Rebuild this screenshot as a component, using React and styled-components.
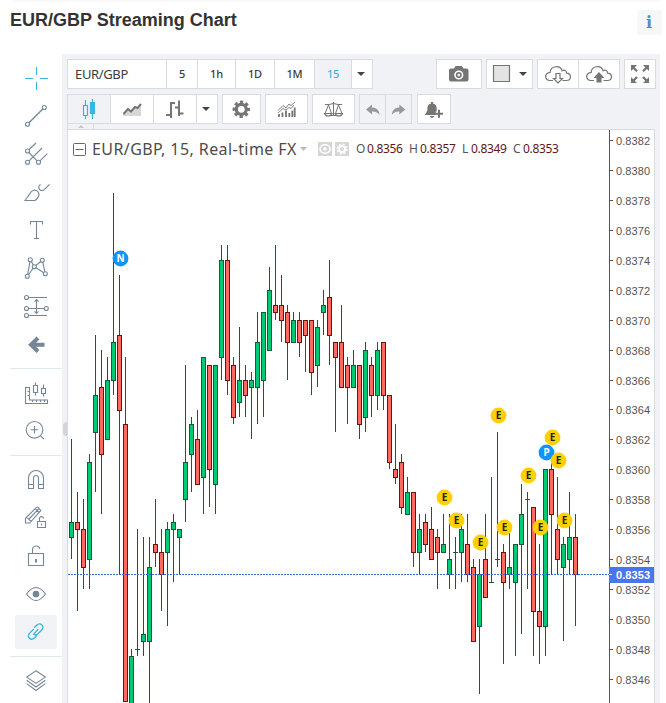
import React from "react";
import styled, { createGlobalStyle, css } from "styled-components";

const GlobalStyle = createGlobalStyle`
  * { box-sizing: border-box; }
  html, body { margin: 0; padding: 0; background: #fff; overflow: hidden; }
  svg { display: block; flex: none; }
`;

const LINE = "#d8dbe0";
const SLATE = "#758696";
const GREY = "#757575";
const BLUE = "#3bb3e4";

const Page = styled.div`
  width: 666px;
  height: 703px;
  overflow: hidden;
  display: flex;
  flex-direction: column;
  background: #fff;
`;

const TopShade = styled.div`
  height: 2px;
  margin: 0 6px 0 14px;
  background: linear-gradient(#f6f6f6, #fdfdfd);
`;

const Header = styled.header`
  height: 52px;
  padding: 8px 4px 0 10px;
  display: flex;
  justify-content: space-between;
  align-items: flex-start;
`;

const Title = styled.h1`
  margin: 0;
  font: bold 18px/20px "Liberation Sans", Arial, sans-serif;
  color: #333;
  letter-spacing: 0;
  white-space: nowrap;
`;

const InfoButton = styled.button`
  width: 25px;
  height: 25px;
  padding: 0 1px 0 0;
  border: 0;
  border-radius: 2px;
  background: #f6f7f8;
  color: #5a8bc4;
  font: bold 16px/25px "DejaVu Serif", serif;
`;

const Body = styled.main`
  flex: 1;
  min-height: 0;
  display: flex;
`;

const Sidebar = styled.nav`
  width: 62px;
  padding: 5px 0 0 10px;
  flex: none;
`;

const ToolGroup = styled.div`
  display: flex;
  flex-direction: column;
  padding: ${(p) => (p.$first ? "0 0 5px" : "5px 0")};
  border-bottom: 1px solid #e0e8ef;
  &:last-child { border: 0; padding-top: 4px; }
`;

const ToolButton = styled.button`
  display: block;
  width: 42px;
  height: 34px;
  flex: none;
  margin: 2px 5px;
  padding: 0;
  border: 0;
  border-radius: 2px;
  overflow: visible;
  background: ${(p) => (p.$active ? "#f1f3f6" : "transparent")};
  svg {
    margin: -2px 0;
    fill: none;
    stroke: ${(p) => (p.$blue || p.$active ? BLUE : SLATE)};
    stroke-width: 1.1;
  }
`;

const Panel = styled.section`
  width: 598px;
  padding: 5px 4px 0 5px;
  background: #f1f2f6;
  display: flex;
  flex-direction: column;
  position: relative;
`;

const Toolbar = styled.div`
  display: flex;
  gap: 4px;
  height: 30px;
  margin-bottom: ${(p) => (p.$last ? 0 : 5)}px;
`;

const ButtonGroup = styled.div`
  display: flex;
  height: 30px;
  border: 1px solid ${LINE};
  background: #fff;
  ${(p) => p.$push && css`margin-left: auto;`}
  ${(p) => p.$shift && css`margin-left: 1px;`}
`;

const Cell = styled.button`
  width: ${(p) => p.$w}px;
  height: 28px;
  padding: 0;
  display: flex;
  align-items: center;
  justify-content: center;
  border: 0;
  border-right: 1px solid ${LINE};
  background: ${(p) => (p.$muted ? "#f1f2f5" : "#fff")};
  color: ${(p) => (p.$active ? BLUE : "#3c3c3c")};
  font: 500 11px/16px "Noto Sans", sans-serif;
  letter-spacing: -0.2px;
  &:last-child { border-right: 0; }
`;

const SymbolCell = styled(Cell)`
  justify-content: flex-start;
  padding: 0 0 1px 7px;
  font-size: 13px;
  font-weight: 400;
  letter-spacing: -0.35px;
`;

const PaneTab = styled.div`
  width: 27px;
  height: 5px;
  border: solid ${LINE};
  border-width: 0 1px 0 1px;
  display: flex;
  justify-content: center;
  padding-top: 1px;
`;

const ChartPane = styled.div`
  width: 588px;
  flex: 1;
  min-height: 0;
  border: solid ${LINE};
  border-width: 1px 1px 0 1px;
  background: #fff;
  position: relative;
`;

const Legend = styled.div`
  position: absolute;
  left: 5px;
  top: 8px;
  height: 22px;
  display: flex;
  align-items: center;
  font-family: "Noto Sans", sans-serif;
`;

const LegendTitle = styled.span`
  width: 207px;
  margin-left: 6px;
  font-size: 16px;
  line-height: 22px;
  color: #4c4c4c;
  letter-spacing: 0.42px;
  white-space: nowrap;
`;

const LegendChip = styled.span`
  width: 14px;
  height: 14px;
  margin-left: ${(p) => p.$gap}px;
  background: #d6d6d6;
`;

const Quote = styled.span`
  width: ${(p) => p.$w}px;
  font-size: 12px;
  line-height: 22px;
  letter-spacing: -0.35px;
  color: ${(p) => (p.$value ? "#5b1a1a" : "#555")};
  white-space: nowrap;
`;

const QuoteRow = styled.span`
  display: flex;
  margin-left: 7px;
`;

const Handle = styled.span`
  position: absolute;
  left: 1px;
  top: 368px;
  width: 4px;
  height: 14px;
  border-radius: 4px 0 0 4px;
  background: #d3d4d7;
`;

const Tool = ({ children, ...props }) => (
  <ToolButton {...props}>
    <svg width="42" height="38" viewBox="0 0 42 38">{children}</svg>
  </ToolButton>
);

const Dots = ({ points }) =>
  points.map(([x, y]) => <circle key={`${x}-${y}`} cx={x} cy={y} r="2" fill="#fff" />);

const DrawingTools = () => (
  <Sidebar>
    <ToolGroup $first>
      <Tool $blue><path d="M21.5 8v8M21.5 23v8M10 19.5h8M25 19.5h8" /></Tool>
      <Tool>
        <path d="M12.5 27.3 29.3 10.5" strokeWidth="1.4" />
        <Dots points={[[12.5, 27.3], [29.3, 10.5]]} />
      </Tool>
      <Tool>
        <path d="M12.5 16 21 8M12.5 27.3 27 13M23.5 27.3 32.3 18.7M12.5 16l11 11.3" />
        <Dots points={[[12.5, 16], [12.5, 27.3], [23.5, 27.3]]} />
      </Tool>
      <Tool><path d="M10 27.5 16.3 18.7Q19.8 15.5 23 18.8 26 23 20 27.5ZM25.5 11.5Q22.3 14 24.8 16.7 27.4 18.7 30 15.8L34.5 11.3" /></Tool>
      <Tool><path d="M15.5 13.5v-3h12v3M21.5 10.5v17M19 27.5h5" /></Tool>
      <Tool>
        <path d="M12.3 27.3 15.3 10.7 19.3 17.7ZM19.3 17.7 27.3 11.3 30.3 24.7Z" />
        <Dots points={[[15.3, 10.7], [27.3, 11.3], [19.3, 17.7], [12.3, 27.3], [30.3, 24.7]]} />
      </Tool>
      <Tool>
        <path d="M13 10.5h19M13 21.5h16M13 28.5h19M21.5 12.5v14M19.5 14.7l2-2.2 2 2.2M19.5 24.3l2 2.2 2-2.2" />
        <Dots points={[[11.5, 10.5], [11.5, 21.5], [31.3, 21.5], [11.5, 28.5]]} />
      </Tool>
      <Tool><path d="M29.5 19.7H16M23 13 16 19.7 23 26.5" strokeWidth="4" /></Tool>
    </ToolGroup>
    <ToolGroup>
      <Tool>
        <path d="M10.5 13.5h4v12.5h18v3.5h-22ZM12.5 17.5h2M12.5 21.5h2M17.5 26v2M21.5 26v2M25.5 26v2M29.5 26v2" />
        <path d="M18.5 11.5h4v7h-4ZM20.5 8.5v3M20.5 18.5v3M26.5 14.5h4v5h-4ZM28.5 10.5v4M28.5 19.5v3" />
      </Tool>
      <Tool>
        <circle cx="19.5" cy="17.8" r="8.3" />
        <path d="M19.5 14v7.5M15.7 17.8h7.5M25.5 23.8l3.5 3.4" />
      </Tool>
    </ToolGroup>
    <ToolGroup>
      <Tool><path d="M13.5 27.5V17a7.5 7.5 0 0 1 15 0v10.5h-5V17a2.5 2.5 0 0 0-5 0v10.5ZM13.5 23.5h5M23.5 23.5h5" /></Tool>
      <Tool>
        <path d="M10.5 24v-4.7L21.7 8.2q1.5-.8 4 3.5L14.7 24ZM12.5 18.8l3.7 3.7M14 20 24 9.7M20.3 9.7l4 4" />
        <path d="M22.5 22.5h8v6h-8ZM24.5 22.5V19q1-2 3-1 1 .5 1 1.5M26.5 24.5v2" />
      </Tool>
      <Tool>
        <path d="M13.5 16.5h15v12h-15ZM17.5 16.500v-4a3.700 3.700 0 0 1 7.300-.7" />
        <path d="M21 22v3.500" strokeWidth="2" />
      </Tool>
      <Tool>
        <path d="M11.500 19q9.500-13 19 0-9.500 13-19 0Z" />
        <circle cx="21" cy="19" r="2.800" fill={SLATE} />
      </Tool>
      <Tool $active>
        <path strokeWidth="1.300" d="m19.200 14.800 2.500-2.500c3.800-3.500 8.200.8 5 4.700l-4 4q-2.200 1.800-4.200.3M22 22.400l-2.400 2.400c-3.800 3.500-8.200-.8-5-4.700l4-4M18.200 21.600l5-5.400" />
      </Tool>
    </ToolGroup>
    <ToolGroup>
      <Tool><path d="m21 9.800 9.300 6.300L21 22.400l-9.300-6.300ZM11.700 19.300 21 26l9.300-6.700M11.700 22.600 21 29.500l9.300-6.900" /></Tool>
    </ToolGroup>
  </Sidebar>
);

/* Toolbar drawings share one coordinate space, each showing its own window of it. */
const Glyph = ({ x, y, w, children }) => (
  <svg width={w} height="28" viewBox={`${x} ${y} ${w} 28`} fill="none" stroke={GREY} strokeWidth="1.2">
    {children}
  </svg>
);

const caret = (x, y) => <path d={`M${x} ${y}h8l-4 4Z`} fill="#444" stroke="none" />;
const cloud = (x) => (
  <path d={`M${x + 8} 80.5h-3.5c-4-.3-5.2-5-2-7.2 1-.8 1.8-.6 2.6-.8.3-6.5 9.7-8.2 12-1.8 2.2-1.5 4.8.2 4.4 2.5 5.5.3 5 7.3 0 7.3h-4`} />
);

const PeriodBar = () => (
  <Toolbar>
    <ButtonGroup>
      <SymbolCell $w={99}>EUR/GBP</SymbolCell>
      <Cell $w={31}>5</Cell>
      <Cell $w={38}>1h</Cell>
      <Cell $w={39}>1D</Cell>
      <Cell $w={40}>1M</Cell>
      <Cell $w={37} $muted $active>15</Cell>
      <Cell $w={20}><Glyph x={352} y={60} w={20}>{caret(357, 72)}</Glyph></Cell>
    </ButtonGroup>
    <ButtonGroup $push>
      <Cell $w={44}>
        <Glyph x={437} y={60} w={44}>
          <path d="M451 68.5h3l1.5-2.5h6.5l1.5 2.5h3q2 0 2 2v9q0 2-2 2h-15.500q-2 0-2-2v-9q0-2 2-2Z" fill={GREY} stroke="none" />
          <circle cx="458.8" cy="75" r="3.8" stroke="#fff" strokeWidth="1.6" />
          <circle cx="458.8" cy="75" r="1.3" fill="#fff" stroke="none" />
        </Glyph>
      </Cell>
    </ButtonGroup>
    <ButtonGroup>
      <Cell $w={45}>
        <Glyph x={487} y={60} w={45}>
          <path d="M493.500 65.500h16v16h-16Z" fill="#e3e3e3" />
          {caret(519, 72)}
        </Glyph>
      </Cell>
    </ButtonGroup>
    <ButtonGroup>
      <Cell $w={41}>
        <Glyph x={538} y={60} w={40}>
          {cloud(545)}
          <path d="M556 73.500h4v5h2.500l-4.500 4.500-4.500-4.500h2.500Z" fill="#fff" />
        </Glyph>
      </Cell>
      <Cell $w={40}>
        <Glyph x={579} y={60} w={40}>
          {cloud(586)}
          <path d="M596.500 82.500v-4.500h-3l5.500-6 5.500 6h-3v4.500Z" fill={GREY} stroke="none" />
        </Glyph>
      </Cell>
    </ButtonGroup>
    <ButtonGroup>
      <Cell $w={30}>
        <Glyph x={625} y={60} w={30}>
          <path strokeWidth="2.300" d="m632.500 66.800 4.500 4.500M647.500 66.800l-4.500 4.500M632.500 81.500l4.500-4.500M647.500 81.500l-4.500-4.500" />
          <path fill={GREY} stroke="none" d="M631 65h6l-6 6ZM649 65h-6l6 6ZM631 83h6l-6-6ZM649 83h-6l6-6Z" />
        </Glyph>
      </Cell>
    </ButtonGroup>
  </Toolbar>
);

const StyleBar = () => (
  <Toolbar $last>
    <ButtonGroup>
      <Cell $w={43} $muted>
        <Glyph x={68} y={95} w={42}>
          <g stroke={BLUE}>
            <path d="M83.500 105.500h4v10h-4ZM85.500 100v5.500M85.500 115.500v3.500M92.500 99v20" />
            <path d="M90.500 102.500h4v11h-4Z" fill={BLUE} />
          </g>
        </Glyph>
      </Cell>
      <Cell $w={43}>
        <Glyph x={111} y={95} w={42}>
          <path d="M123 114 128 109l3 2 4-4 2 1 4-4v12h-18Z" fill="#d6d6d6" stroke="none" />
          <path d="m123.500 114 4.500-5 3 2.500 4-4.500 2.500 1 3.500-4" strokeWidth="2" />
        </Glyph>
      </Cell>
      <Cell $w={43}>
        <Glyph x={154} y={95} w={42}>
          <path strokeWidth="2" d="M171 102v16M166 115h4.500M171 103h4M179 100.500v15.500M175 107.500h3.500M179 113.500h4.500" />
        </Glyph>
      </Cell>
      <Cell $w={20}><Glyph x={197} y={95} w={20}>{caret(202, 107)}</Glyph></Cell>
    </ButtonGroup>
    <ButtonGroup>
      <Cell $w={37}>
        <Glyph x={223} y={95} w={37}>
          <circle cx="241.300" cy="109.300" r="5" strokeWidth="3.200" />
          <circle cx="241.300" cy="109.300" r="7.200" strokeWidth="3" strokeDasharray="3.200 2.455" strokeDashoffset="1.600" />
        </Glyph>
      </Cell>
    </ButtonGroup>
    <ButtonGroup>
      <Cell $w={41}>
        <Glyph x={266} y={95} w={41}>
          <path strokeWidth="1.800" d="M279 117v-3M282.500 117v-4.500M286 117v-6.500M289.300 117v-4M292.300 117v-6.500M294.700 117v-9.500" />
          <path d="m278 110.500 5-5 3 2.500 3-4 2 1.500 4-3.500M278 113l5-4.500 3 1.500 3-2.500 2 1 3-3.500" strokeWidth=".9" />
        </Glyph>
      </Cell>
    </ButtonGroup>
    <ButtonGroup>
      <Cell $w={41}>
        <Glyph x={313} y={95} w={41}>
          <path d="M325 104.500h4q4.500-2 9 0h4M333.500 102v13.500M329.500 115.500h8M328.500 105l-3.500 8.500M328.500 105l3 8.500M338.500 105l-3 8.500M338.500 105l3.500 8.500" strokeWidth="1" />
          <path d="M324.500 113.500h7.500q-1 2.500-3.700 2.500t-3.800-2.500ZM335 113.500h7.500q-1 2.500-3.700 2.500t-3.800-2.500Z" />
        </Glyph>
      </Cell>
    </ButtonGroup>
    <ButtonGroup>
      <Cell $w={26} $muted>
        <Glyph x={360} y={95} w={25}>
          <path d="m366 109.500 6-5v3q7 0 7.500 7.500-2-3.700-7.500-3.500v3Z" fill="#999" stroke="none" />
        </Glyph>
      </Cell>
      <Cell $w={25} $muted>
        <Glyph x={386} y={95} w={25}>
          <path d="m405.300 109.500-6-5v3q-7 0-7.500 7.500 2-3.700 7.500-3.500v3Z" fill="#999" stroke="none" />
        </Glyph>
      </Cell>
    </ButtonGroup>
    <ButtonGroup $shift>
      <Cell $w={32}>
        <Glyph x={418} y={95} w={32}>
          <path d="M424.500 115q3-2.500 3-7.500.3-3.500 3.500-4v-1.500h2v1.500q3.500.5 3.700 4.500v3.500h-1v3.500ZM429.500 116h5q-2.500 4-5 0Z" fill={GREY} stroke="none" />
          <path d="M435 113.800h8M439 109.800v8" strokeWidth="2" />
        </Glyph>
      </Cell>
    </ButtonGroup>
  </Toolbar>
);

/* wick top, body top, body bottom, wick bottom, kind: g = up, r = down, d = doji (body top is the close) */
const CANDLES = [
  [439,522,538,559,"g"],[492,522,530,611,"r"],[499,529,568,589,"r"],[454,462,560,589,"g"],
  [335,395,433,492,"g"],[350,387,455,514,"r"],[357,380,440,440,"g"],[193,342,381,395,"g"],
  [275,335,411,574,"r"],[357,424,702,702,"r"],[649,656,720,720,"g"],[529,649,650,656,"d"],
  [537,634,642,656,"g"],[537,567,642,720,"g"],[499,544,553,567,"r"],[529,552,575,611,"r"],
  [522,529,553,626,"g"],[514,522,530,582,"g"],[529,529,538,575,"g"],[365,462,500,522,"g"],
  [417,424,455,492,"g"],[410,439,485,485,"r"],[357,357,478,514,"g"],[365,365,470,507,"r"],
  [365,365,485,514,"g"],[245,260,358,380,"g"],[245,260,381,395,"r"],[357,365,418,424,"r"],
  [327,380,403,417,"g"],[365,380,396,417,"r"],[372,380,388,439,"g"],[312,342,388,424,"g"],
  [312,312,381,417,"g"],[267,290,351,351,"g"],[245,305,313,320,"r"],[275,305,321,342,"r"],
  [305,312,343,380,"r"],[312,320,343,343,"g"],[312,320,343,357,"r"],[320,320,336,372,"r"],
  [320,320,373,395,"r"],[320,327,366,387,"g"],[290,305,313,335,"g"],[260,297,336,365,"r"],
  [342,342,358,432,"r"],[305,342,388,388,"r"],[357,365,388,424,"r"],[350,365,388,388,"g"],
  [365,365,425,439,"r"],[342,350,418,432,"g"],[357,365,396,417,"r"],[342,350,396,410,"g"],
  [342,342,396,410,"r"],[395,395,463,469,"r"],[424,469,478,484,"r"],[454,462,508,514,"r"],
  [477,492,515,515,"g"],[492,492,553,567,"r"],[514,529,553,574,"g"],[514,522,545,552,"r"],
  [507,529,560,560,"r"],[529,537,553,589,"r"],[514,544,553,553,"g"],[514,559,575,589,"g"],
  [537,552,553,589,"d"],[514,529,553,582,"g"],[514,544,575,582,"r"],[559,567,642,642,"r"],
  [559,574,627,694,"g"],[514,559,598,598,"r"],[477,582,583,583,"d"],[432,559,560,567,"d"],
  [544,552,583,664,"r"],[529,567,575,589,"g"],[544,544,583,656,"g"],[484,514,545,634,"g"],
  [492,499,500,589,"d"],[507,507,612,656,"r"],[544,611,627,664,"r"],[469,469,627,656,"g"],
  [462,469,515,574,"r"],[477,529,560,574,"r"],[537,544,568,641,"g"],[492,537,560,574,"g"],
  [514,537,575,626,"r"],
];

const EVENTS = [
  [120.5,258.5,"N"],[498.5,415.5,"E"],[444.5,497.5,"E"],[456.5,520.5,"E"],[480.5,542.5,"E"],
  [504.5,527.5,"E"],[528.5,475.5,"E"],[546.5,452.5,"P"],[552.5,437.5,"E"],[558.5,460.5,"E"],
  [540.5,527.5,"E"],[564.5,520.5,"E"],
];

const TICKS = Array.from({ length: 19 }, (_, i) => ({
  y: Math.floor(140.5 + i * 29.94),
  label: ((8382 - i * 2) / 10000).toFixed(4),
}));

const PlotText = styled.text`
  font: ${(p) => (p.$bold ? "bold" : "normal")} 11px "Liberation Sans", Arial, sans-serif;
  fill: ${(p) => p.$color};
`;

const EventText = styled.text`
  font: bold 10px "Noto Sans", sans-serif;
  text-anchor: middle;
  fill: ${(p) => p.$color};
`;

const Candle = ({ index, data: [high, top, bottom, low, kind] }) => {
  const x = 71 + index * 6;
  return (
    <g>
      <rect x={x} y={high} width="1" height={low - high} fill="#225437" />
      {kind === "d" ? (
        <rect x={x - 2} y={top} width="5" height="1" fill="#225437" />
      ) : (
        <rect
          x={x - 1.5} y={top + 0.5} width="4" height={bottom - top - 1}
          fill={kind === "g" ? "#00c975" : "#ff6960"}
          stroke={kind === "g" ? "#225437" : "#5b1a13"}
        />
      )}
    </g>
  );
};

const Plot = () => (
  <svg width="586" height="573" viewBox="68 130 586 573">
    {CANDLES.map((c, i) => <Candle key={i} index={i} data={c} />)}
    <path d="M68 574.5H609" stroke="#3a6be0" strokeDasharray="2 1" />
    {EVENTS.map(([x, y, letter]) => (
      <g key={`${x}-${y}`}>
        <circle cx={x} cy={y} r="7.900" fill={letter === "E" ? "#ffd000" : "#0d96fb"} />
        <EventText x={x} y={y + 3} $color={letter === "E" ? "#222" : "#fff"}>{letter}</EventText>
      </g>
    ))}
    <rect x="609" y="130" width="1" height="573" fill="#555" />
    {TICKS.map(({ y, label }) => (
      <g key={label}>
        <rect x="610" y={y} width="3" height="1" fill="#555" />
        <PlotText x="616" y={y + 5} textLength="34" $color="#555">{label}</PlotText>
      </g>
    ))}
    <rect x="609" y="567" width="45" height="16" fill="#4a76ec" />
    <rect x="609" y="574" width="3" height="1" fill="#fff" />
    <PlotText x="616" y="579" textLength="34" $bold $color="#fff">0.8353</PlotText>
  </svg>
);

const QUOTES = [["O", "0.8356", 11, 42], ["H", "0.8357", 11, 42], ["L", "0.8349", 9, 42], ["C", "0.8353", 10, 36]];

const ChartLegend = () => (
  <Legend>
    <svg width="13" height="13" viewBox="0 0 13 13" fill="none" stroke="#666">
      <rect x=".5" y=".5" width="12" height="12" rx="1" />
      <path d="M2.500 6.500h8" />
    </svg>
    <LegendTitle>EUR/GBP, 15, Real-time FX</LegendTitle>
    <svg width="9" height="4" viewBox="0 0 9 4"><path d="M1 0h7L4.500 4Z" fill="#bbb" /></svg>
    <LegendChip $gap={10}>
      <svg width="14" height="14" viewBox="0 0 14 14" fill="none" stroke="#fff">
        <ellipse cx="7" cy="7" rx="5" ry="4.200" strokeWidth="1.600" /><circle cx="7" cy="7" r="1.200" fill="#fff" />
      </svg>
    </LegendChip>
    <LegendChip $gap={3}>
      <svg width="14" height="14" viewBox="0 0 14 14" fill="none" stroke="#fff">
        <circle cx="7" cy="7" r="3" strokeWidth="2" /><circle cx="7" cy="7" r="4.500" strokeWidth="2" strokeDasharray="1.900 1.634" />
      </svg>
    </LegendChip>
    <QuoteRow>
      {QUOTES.map(([name, value, a, b]) => (
        <React.Fragment key={name}>
          <Quote $w={a}>{name}</Quote>
          <Quote $w={b} $value>{value}</Quote>
        </React.Fragment>
      ))}
    </QuoteRow>
  </Legend>
);

export default function App() {
  return (
    <Page>
      <GlobalStyle />
      <TopShade />
      <Header>
        <Title>EUR/GBP Streaming Chart</Title>
        <InfoButton>i</InfoButton>
      </Header>
      <Body>
        <DrawingTools />
        <Panel>
          <PeriodBar />
          <StyleBar />
          <PaneTab>
            <svg width="6" height="3" viewBox="0 0 6 3"><path d="M3 0 6 3H0Z" fill="#c4c6ca" /></svg>
          </PaneTab>
          <ChartPane>
            <Plot />
            <ChartLegend />
          </ChartPane>
          <Handle />
        </Panel>
      </Body>
    </Page>
  );
}
